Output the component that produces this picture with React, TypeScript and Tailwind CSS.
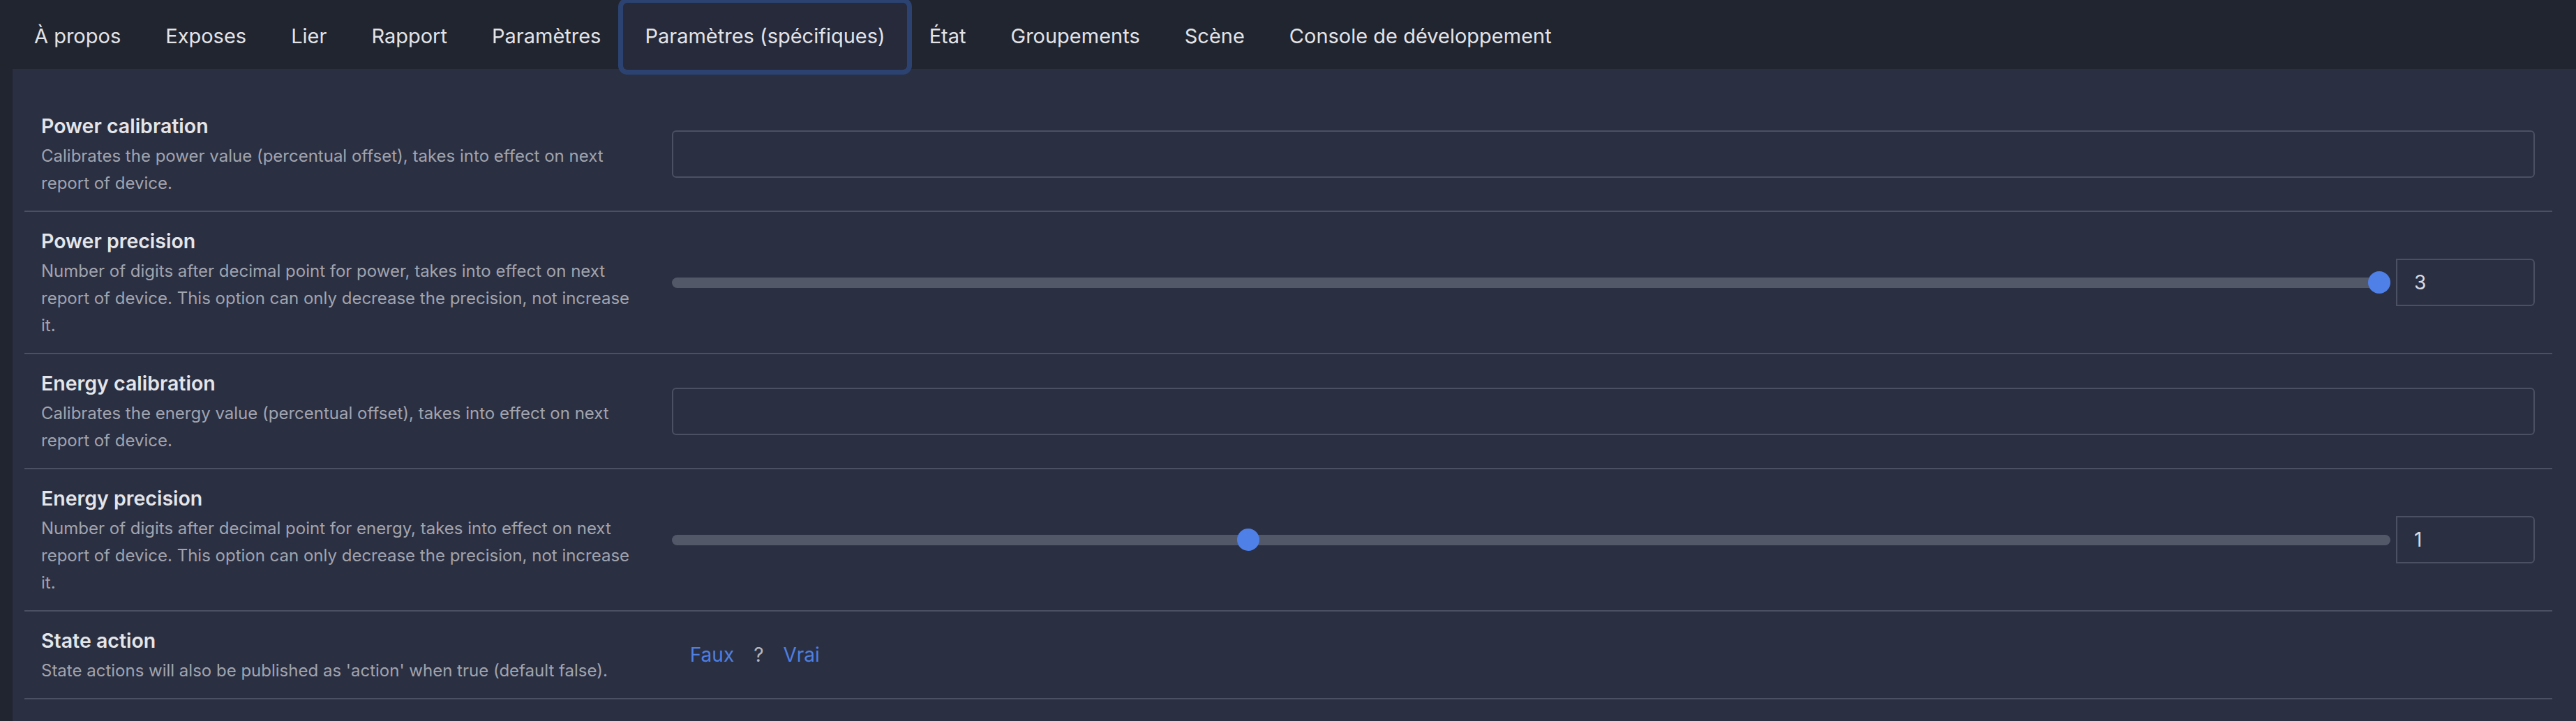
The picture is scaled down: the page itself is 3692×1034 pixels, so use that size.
import React from "react";

const tabs = [
  "À propos",
  "Exposes",
  "Lier",
  "Rapport",
  "Paramètres",
  "Paramètres (spécifiques)",
  "État",
  "Groupements",
  "Scène",
  "Console de développement",
];

function Label({ title, desc }: { title: string; desc: string }) {
  return (
    <div className="w-1/4 shrink-0 pl-[24px] pr-[22px] pt-[24px] pb-[20px]">
      <div className="text-[28.5px] leading-[36px] font-semibold text-[#e4e5e9]">{title}</div>
      <div className="mt-[5px] text-[24px] leading-[39px] text-[#a1a4ae]">{desc}</div>
    </div>
  );
}

function TextBox() {
  return <div className="h-[68px] w-full rounded-[6px] border-2 border-[#4b5062]" />;
}

function Slider({ value, max }: { value: number; max: number }) {
  const pct = (value / max) * 100;
  return (
    <div className="flex items-center gap-[8px]">
      <div className="relative flex h-[32px] flex-1 items-center">
        <div className="h-[15px] w-full rounded-full bg-[#535868]" />
        <div
          className="absolute top-0 h-[32px] w-[32px] rounded-full bg-[#4e80e8]"
          style={{ left: `calc(${pct}% - ${(pct / 100) * 32}px)` }}
        />
      </div>
      <div className="flex h-[68px] w-[199px] items-center rounded-r-[6px] border-2 border-[#4b5062] pl-[24px] text-[28px] text-[#d9dae0]">
        {value}
      </div>
    </div>
  );
}

function Row({ title, desc, children }: { title: string; desc: string; children: React.ReactNode }) {
  return (
    <div className="flex items-center border-b-2 border-[#4b5062]">
      <Label title={title} desc={desc} />
      <div className="w-3/4 pl-[22px] pr-[25px]">{children}</div>
    </div>
  );
}

export default function App() {
  return (
    <div className="flex min-h-screen flex-col bg-[#21252f] font-['Inter','Noto_Sans',sans-serif]">
      <nav className="relative z-10 flex h-[99px] shrink-0 items-start pl-[17px]">
        {tabs.map((t) => {
          const active = t === "Paramètres (spécifiques)";
          return (
            <div
              key={t}
              className={
                active
                  ? "mt-[4px] flex h-[96px] items-center rounded-[6px] bg-[#262a3b] px-[31px] text-[29px] text-[#e2e3e7] shadow-[0_0_0_7px_#2c4372]"
                  : "mt-[4px] flex h-[96px] items-center px-[32px] text-[29px] text-[#e2e3e7]"
              }
            >
              {t}
            </div>
          );
        })}
      </nav>
      <main className="ml-[18px] flex-1 bg-[#2a2f42] pl-[17px] pr-[34px] pt-[40px]">
        <Row
          title="Power calibration"
          desc="Calibrates the power value (percentual offset), takes into effect on next report of device."
        >
          <TextBox />
        </Row>
        <Row
          title="Power precision"
          desc="Number of digits after decimal point for power, takes into effect on next report of device. This option can only decrease the precision, not increase it."
        >
          <Slider value={3} max={3} />
        </Row>
        <Row
          title="Energy calibration"
          desc="Calibrates the energy value (percentual offset), takes into effect on next report of device."
        >
          <TextBox />
        </Row>
        <Row
          title="Energy precision"
          desc="Number of digits after decimal point for energy, takes into effect on next report of device. This option can only decrease the precision, not increase it."
        >
          <Slider value={1} max={3} />
        </Row>
        <Row
          title="State action"
          desc="State actions will also be published as 'action' when true (default false)."
        >
          <div className="flex items-center gap-[28px] pl-[26px] text-[28px]">
            <span className="text-[#4f7fe0]">Faux</span>
            <span className="text-[#b4b6bd]">?</span>
            <span className="text-[#4f7fe0]">Vrai</span>
          </div>
        </Row>
      </main>
    </div>
  );
}
